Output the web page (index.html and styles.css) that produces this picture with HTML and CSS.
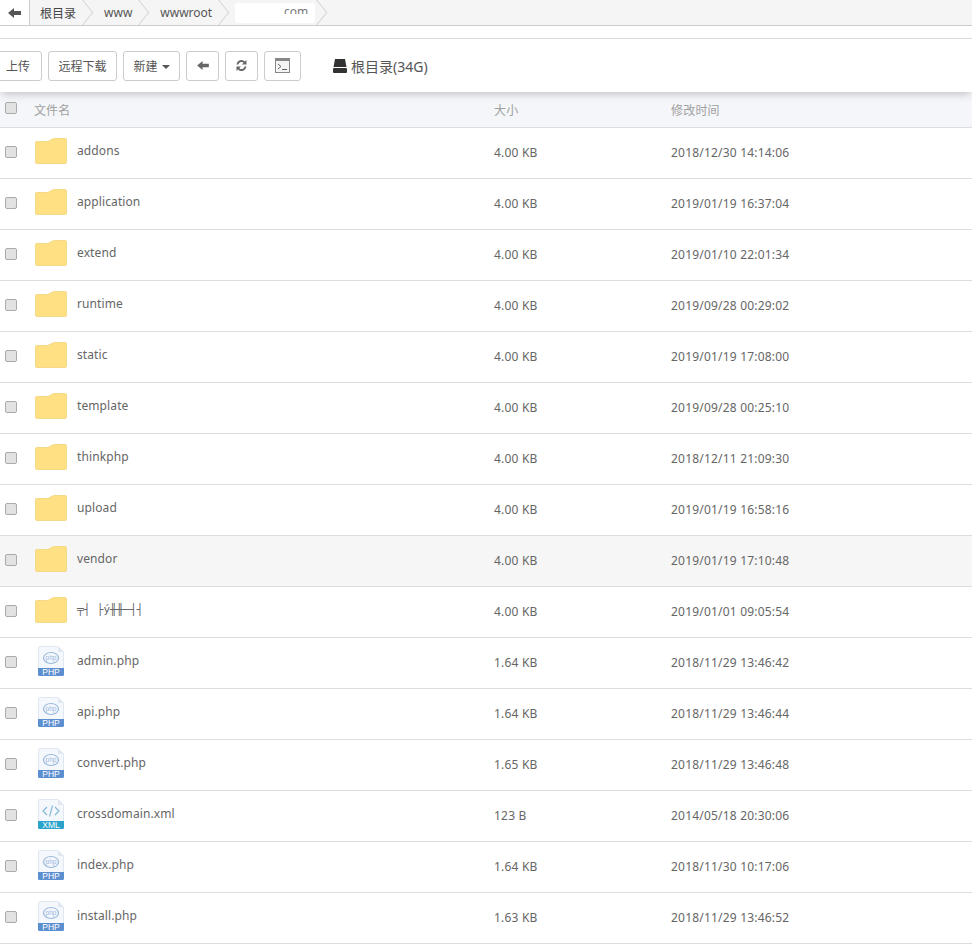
FILE: index.html
```html
<!DOCTYPE html>
<html lang="en">
<head>
    <meta charset="UTF-8">
    <meta name="viewport" content="width=device-width, initial-scale=1.0">
    <title>File Manager</title>
    <link rel="stylesheet" href="styles.css">
</head>
<body>
    <svg class="defs" width="0" height="0">
        <symbol id="folder" viewBox="0 0 32 26">
            <path d="M.5 4.500Q.5 3.500 1.500 3.500H13L17.500 1Q18.500.5 19.500.5H30Q31.500.5 31.500 2V24Q31.500 25.500 30 25.500H2Q.5 25.500.5 24Z" fill="#ffe083" stroke="#f4d988" stroke-width="1"/>
        </symbol>
        <symbol id="php" viewBox="0 0 26 30">
            <path d="M.5 23V2Q.5.500 2 .5H20L25.500 6V23Z" fill="#f4f7fc" stroke="#e0e7f1"/>
            <path d="M20 .5V6H25.500" fill="#dfe7f1"/>
            <ellipse cx="13" cy="12" rx="7.500" ry="5.500" fill="none" stroke="#9ab8dc" stroke-width="1.200"/>
            <text x="13" y="14" class="tiny" fill="#9ab8dc">php</text>
            <path d="M0 22H26V28.500Q26 30 24.500 30H1.500Q0 30 0 28.500Z" fill="#5c8fd0"/>
            <text x="13" y="29" class="tag" fill="#fff">PHP</text>
        </symbol>
        <symbol id="xml" viewBox="0 0 26 30">
            <path d="M.5 23V2Q.5.500 2 .5H20L25.500 6V23Z" fill="#f4f7fc" stroke="#e0e7f1"/>
            <path d="M20 .5V6H25.500" fill="#dfe7f1"/>
            <path d="M9 8L5 12L9 16M17 8L21 12L17 16M14.500 6.500L11.500 17.500" fill="none" stroke="#7fb6d8" stroke-width="1.100"/>
            <path d="M0 22H26V28.500Q26 30 24.500 30H1.500Q0 30 0 28.500Z" fill="#2ba3cb"/>
            <text x="13" y="29" class="tag" fill="#fff">XML</text>
        </symbol>
    </svg>

    <div class="crumbs">
        <a class="crumb-back">
            <svg width="13" height="10" viewBox="0 0 13 10"><path d="M0 5L6 0V3H13V7H6V10Z" fill="#555"/></svg>
        </a>
        <a class="crumb crumb-root">根目录</a>
        <a class="crumb">www</a>
        <a class="crumb">wwwroot</a>
        <a class="crumb crumb-hidden"><span class="blot"><span>com</span></span></a>
    </div>
    <div class="strip"></div>

    <div class="toolbar">
        <button class="btn btn-first">上传</button>
        <button class="btn btn-wide">远程下载</button>
        <button class="btn btn-menu">新建 <i class="caret"></i></button>
        <button class="btn btn-icon">
            <svg width="12" height="9" viewBox="0 0 13 10"><path d="M0 5L6 0V3H13V7H6V10Z" fill="#666"/></svg>
        </button>
        <button class="btn btn-icon">
            <svg width="13" height="13" viewBox="0 0 13 13"><path d="M1.500 5.500A5 5 0 0 1 10 2.500L11.500 1V5.500H7L8.700 3.800A3.200 3.200 0 0 0 3.400 5.500ZM11.500 7.500A5 5 0 0 1 3 10.500L1.500 12V7.500H6L4.300 9.200A3.200 3.200 0 0 0 9.600 7.500Z" fill="#666"/></svg>
        </button>
        <button class="btn btn-icon btn-term">
            <svg width="15" height="15" viewBox="0 0 15 15"><rect x=".5" y=".5" width="14" height="14" fill="#f4f4f4" stroke="#888"/><rect x="1" y="1" width="13" height="2" fill="#888"/><path d="M3 6L6 8.500L3 11M7 11.500H12" fill="none" stroke="#666"/></svg>
        </button>
        <div class="disk">
            <svg width="14" height="14" viewBox="0 0 14 14"><path d="M2 0H12L13.500 8H.5Z" fill="#333"/><rect y="9" width="14" height="5" rx="1" fill="#333"/></svg>
            <span>根目录(34G)</span>
        </div>
    </div>

    <div class="table">
        <div class="row head">
            <span class="check"></span>
            <span class="col-name">文件名</span>
            <span class="col-size">大小</span>
            <span class="col-time">修改时间</span>
        </div>
        <div class="row"><span class="check"></span><svg class="ico-folder"><use href="#folder"/></svg><span class="col-name">addons</span><span class="col-size">4.00 KB</span><span class="col-time">2018/12/30 14:14:06</span></div>
        <div class="row"><span class="check"></span><svg class="ico-folder"><use href="#folder"/></svg><span class="col-name">application</span><span class="col-size">4.00 KB</span><span class="col-time">2019/01/19 16:37:04</span></div>
        <div class="row"><span class="check"></span><svg class="ico-folder"><use href="#folder"/></svg><span class="col-name">extend</span><span class="col-size">4.00 KB</span><span class="col-time">2019/01/10 22:01:34</span></div>
        <div class="row"><span class="check"></span><svg class="ico-folder"><use href="#folder"/></svg><span class="col-name">runtime</span><span class="col-size">4.00 KB</span><span class="col-time">2019/09/28 00:29:02</span></div>
        <div class="row"><span class="check"></span><svg class="ico-folder"><use href="#folder"/></svg><span class="col-name">static</span><span class="col-size">4.00 KB</span><span class="col-time">2019/01/19 17:08:00</span></div>
        <div class="row"><span class="check"></span><svg class="ico-folder"><use href="#folder"/></svg><span class="col-name">template</span><span class="col-size">4.00 KB</span><span class="col-time">2019/09/28 00:25:10</span></div>
        <div class="row"><span class="check"></span><svg class="ico-folder"><use href="#folder"/></svg><span class="col-name">thinkphp</span><span class="col-size">4.00 KB</span><span class="col-time">2018/12/11 21:09:30</span></div>
        <div class="row"><span class="check"></span><svg class="ico-folder"><use href="#folder"/></svg><span class="col-name">upload</span><span class="col-size">4.00 KB</span><span class="col-time">2019/01/19 16:58:16</span></div>
        <div class="row hover"><span class="check"></span><svg class="ico-folder"><use href="#folder"/></svg><span class="col-name">vendor</span><span class="col-size">4.00 KB</span><span class="col-time">2019/01/19 17:10:48</span></div>
        <div class="row"><span class="check"></span><svg class="ico-folder"><use href="#folder"/></svg><span class="col-name mojibake">╤┤ ├ý╫╫─┤┤</span><span class="col-size">4.00 KB</span><span class="col-time">2019/01/01 09:05:54</span></div>
        <div class="row"><span class="check"></span><svg class="ico-file"><use href="#php"/></svg><span class="col-name">admin.php</span><span class="col-size">1.64 KB</span><span class="col-time">2018/11/29 13:46:42</span></div>
        <div class="row"><span class="check"></span><svg class="ico-file"><use href="#php"/></svg><span class="col-name">api.php</span><span class="col-size">1.64 KB</span><span class="col-time">2018/11/29 13:46:44</span></div>
        <div class="row"><span class="check"></span><svg class="ico-file"><use href="#php"/></svg><span class="col-name">convert.php</span><span class="col-size">1.65 KB</span><span class="col-time">2018/11/29 13:46:48</span></div>
        <div class="row"><span class="check"></span><svg class="ico-file"><use href="#xml"/></svg><span class="col-name">crossdomain.xml</span><span class="col-size">123 B</span><span class="col-time">2014/05/18 20:30:06</span></div>
        <div class="row"><span class="check"></span><svg class="ico-file"><use href="#php"/></svg><span class="col-name">index.php</span><span class="col-size">1.64 KB</span><span class="col-time">2018/11/30 10:17:06</span></div>
        <div class="row"><span class="check"></span><svg class="ico-file"><use href="#php"/></svg><span class="col-name">install.php</span><span class="col-size">1.63 KB</span><span class="col-time">2018/11/29 13:46:52</span></div>
    </div>
</body>
</html>
```

FILE: styles.css
```css
html, body {
    margin: 0;
    height: 100%;
    overflow: hidden;
}
body {
    background-color: #ffffff;
    color: #666666;
    font-family: "Noto Sans", "Noto Sans CJK SC", sans-serif;
    font-size: 12px;
}
.defs {
    position: absolute;
}
.tiny {
    font: 6.5px "Liberation Sans", sans-serif;
    text-anchor: middle;
}
.tag {
    font: 8.5px "Liberation Sans", sans-serif;
    text-anchor: middle;
}

/* breadcrumb */
.crumbs {
    display: flex;
    height: 25px;
    background-color: #f5f5f5;
    border-bottom: 1px solid #cccccc;
    overflow: hidden;
}
.crumb-back {
    display: flex;
    align-items: center;
    justify-content: center;
    width: 29px;
    background-color: #ffffff;
    border-right: 1px solid #cccccc;
}
.crumb {
    position: relative;
    display: flex;
    align-items: center;
    padding: 0 17px 0 11px;
    font-size: 12px;
    color: #555555;
}
.crumb::after {
    content: "";
    position: absolute;
    right: 1px;
    top: 3px;
    width: 18px;
    height: 18px;
    border-top: 1px solid #d4d4d4;
    border-right: 1px solid #d4d4d4;
    transform: scaleX(0.8) rotate(45deg);
}
.crumb-root {
    padding-left: 10px;
    color: #444444;
}
.crumb-hidden {
    padding: 0 5px 0 6px;
}
.blot {
    position: relative;
    z-index: 1;
    display: block;
    width: 80px;
    height: 20px;
    background-color: #ffffff;
    border-radius: 3px;
    overflow: hidden;
}
.blot span {
    display: block;
    height: 5px;
    margin-top: 6px;
    padding-right: 7px;
    text-align: right;
    line-height: 5px;
    overflow: hidden;
    color: #777777;
}
.crumb-hidden {
    padding-right: 12px;
}

.strip {
    height: 12px;
    background-color: #ffffff;
    border-bottom: 1px solid #dddddd;
}

/* toolbar */
.toolbar {
    position: relative;
    display: flex;
    align-items: center;
    gap: 6px;
    height: 53px;
    background-color: #ffffff;
    box-shadow: 0 4px 8px -2px rgba(0, 0, 0, 0.22);
}
.btn {
    height: 30px;
    padding: 0;
    border: 1px solid #cccccc;
    border-radius: 3px;
    background-color: #ffffff;
    color: #555555;
    font-family: inherit;
    font-size: 12px;
    white-space: nowrap;
}
.btn-first {
    width: 48px;
    margin-left: -6px;
}
.btn-wide {
    width: 69px;
}
.btn-menu {
    width: 57px;
}
.btn-icon {
    display: flex;
    align-items: center;
    justify-content: center;
    width: 33px;
}
.btn-term {
    width: 37px;
}
.caret {
    display: inline-block;
    width: 0;
    height: 0;
    margin-left: 1px;
    vertical-align: middle;
    border-top: 4px solid #555555;
    border-left: 4px solid transparent;
    border-right: 4px solid transparent;
}
.disk {
    display: flex;
    align-items: center;
    gap: 4px;
    margin-left: 26px;
    font-size: 14px;
    color: #555555;
}

/* list */
.row {
    display: flex;
    align-items: center;
    height: 50px;
    border-bottom: 1px solid #dddddd;
}
.head {
    height: 35px;
    background-color: #f4f6f9;
    color: #a0a0a0;
}
.head .col-name {
    width: 460px;
    margin-top: 0;
    margin-left: 34px;
}
.head .col-size,
.head .col-time {
    margin-top: 0;
}
.head .check {
    margin-top: -3px;
}
.hover {
    background-color: #f6f6f6;
}
.check {
    flex: none;
    width: 12px;
    height: 12px;
    margin-top: -2px;
    margin-left: 5px;
    margin-right: -17px;
    border: 1px solid #aaaaaa;
    border-radius: 2px;
    background-color: #e2e2e2;
    box-sizing: border-box;
}
.ico-folder {
    flex: none;
    width: 32px;
    height: 26px;
    margin: -4px 10px 0 35px;
}
.ico-file {
    flex: none;
    width: 26px;
    height: 30px;
    margin: -5px 13px 0 38px;
}
.col-name {
    width: 417px;
    margin-top: -5px;
    font-size: 12px;
    letter-spacing: 0.1px;
}
.col-size {
    width: 177px;
    margin-top: -2px;
    letter-spacing: 0.2px;
}
.col-time {
    margin-top: -2px;
    letter-spacing: 0.2px;
}
.mojibake {
    font-family: "DejaVu Sans Mono", monospace;
    font-size: 11px;
    letter-spacing: 0;
}
```
